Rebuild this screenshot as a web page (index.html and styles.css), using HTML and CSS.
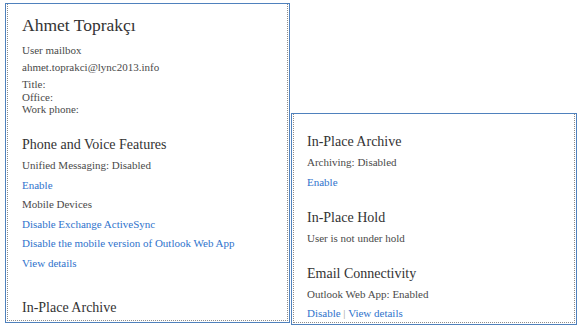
FILE: index.html
```html
<!DOCTYPE html>
<html lang="en">
<head>
    <meta charset="UTF-8">
    <title>Ahmet Toprakçı - User mailbox</title>
    <link rel="stylesheet" href="styles.css">
</head>
<body>
    <div class="layout">
        <div class="pane pane-user">
            <div class="pane-inner">
                <h1 class="user-name">Ahmet Toprakçı</h1>
                <div class="summary">
                    <p>User mailbox</p>
                    <p>ahmet.toprakci@lync2013.info</p>
                </div>
                <div class="contact">
                    <div>Title:</div>
                    <div>Office:</div>
                    <div>Work phone:</div>
                </div>

                <div class="section section-first">
                    <h2>Phone and Voice Features</h2>
                    <p>Unified Messaging: Disabled</p>
                    <p><a href="#">Enable</a></p>
                    <p>Mobile Devices</p>
                    <p><a href="#">Disable Exchange ActiveSync</a></p>
                    <p><a href="#">Disable the mobile version of Outlook Web App</a></p>
                    <p><a href="#">View details</a></p>
                </div>

                <div class="section section-wide">
                    <h2>In-Place Archive</h2>
                </div>
            </div>
        </div>

        <div class="pane pane-extra">
            <div class="pane-inner pane-inner-scrolled">
                <div class="section section-top">
                    <h2>In-Place Archive</h2>
                    <p>Archiving: Disabled</p>
                    <p><a href="#">Enable</a></p>
                </div>
                <div class="section">
                    <h2>In-Place Hold</h2>
                    <p>User is not under hold</p>
                </div>
                <div class="section">
                    <h2>Email Connectivity</h2>
                    <p>Outlook Web App: Enabled</p>
                    <p><a href="#">Disable</a> <span class="sep">|</span> <a href="#">View details</a></p>
                </div>
            </div>
        </div>
    </div>
</body>
</html>
```

FILE: styles.css
```css
body { margin: 0; padding: 3px 0 0 5px; background: #fff; color: #4a4a4a; font-family: "Liberation Serif", "Times New Roman", serif; font-size: 11px; }
p { margin: 0; }
a { color: #2f73cc; text-decoration: none; }

.layout { display: flex; align-items: flex-start; gap: 1px; }
.pane { box-sizing: border-box; border: 1px solid #4f81bd; padding: 0 1px 1px; overflow: hidden; }
.pane-user { width: 285px; height: 320px; }
.pane-extra { width: 286px; height: 212px; margin-top: 110px; }
.pane-inner { box-sizing: border-box; height: 100%; overflow: hidden; border: 1px dotted #8c8c8c; border-top: none; padding: 9px 14px 0; }
.pane-inner-scrolled { padding-top: 18px; padding-left: 13px; }

.user-name { margin: 0; font-size: 17.5px; font-weight: normal; line-height: 24px; color: #333; }
.summary { margin-top: 5px; line-height: 17px; }
.contact { margin-top: 2px; line-height: 12.5px; }

.section { margin-top: 15.5px; }
.section-top { margin-top: 0; }
.section-first { margin-top: 19.5px; }
.section-wide { margin-top: 24px; }
.section h2 { margin: 0 0 1px; font-size: 14px; font-weight: normal; line-height: 20px; color: #333; }
.section p { line-height: 19.6px; }
.sep { color: #999; }
```
